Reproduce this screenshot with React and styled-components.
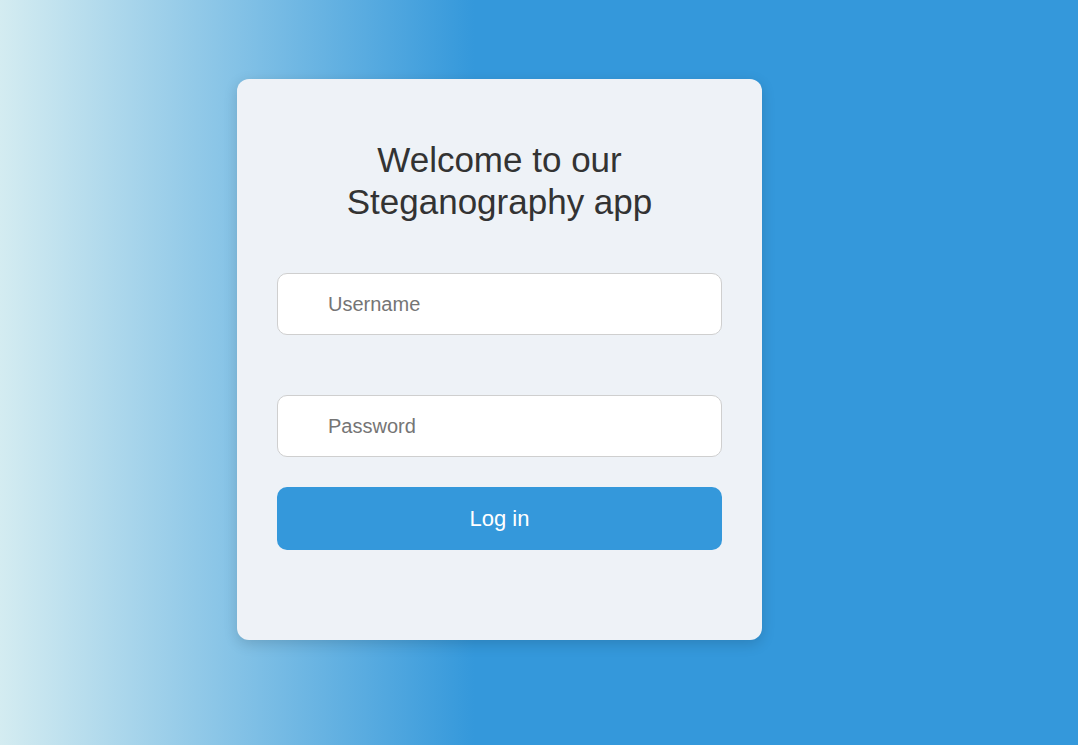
import styled, { createGlobalStyle } from 'styled-components';

const GlobalStyle = createGlobalStyle`
html, body {
  margin: 0;
  padding: 0;
  height: 100%;
}
body {
  font-family: "Liberation Sans", Arial, sans-serif;
}
`;

const Page = styled.div`
min-height: 745px;
box-sizing: border-box;
padding: 79px 0 0 237px;
background: linear-gradient(to right, #d4ecf1 0%, #3498db 44%, #3498db 100%);
`;

const Card = styled.div`
width: 525px;
height: 561px;
box-sizing: border-box;
padding: 60px 40px 0;
background-color: #eef2f7;
border-radius: 12px;
box-shadow: 0 4px 14px rgba(0, 0, 0, 0.15);
display: flex;
flex-direction: column;
`;

const Title = styled.h1`
margin: 0 0 50px;
font-size: 35px;
font-weight: normal;
line-height: 42px;
color: #333;
text-align: center;
`;

const Form = styled.form`
display: flex;
flex-direction: column;
`;

const Field = styled.input`
height: 62px;
box-sizing: border-box;
margin-bottom: ${p => p.$gap}px;
padding: 0 0 0 50px;
border: 1px solid #cfcfcf;
border-radius: 10px;
background: #fff;
font-family: "Liberation Sans", Arial, sans-serif;
font-size: 20px;
color: #333;
outline: none;
&::placeholder {
  color: #757575;
}
`;

const LoginButton = styled.button`
height: 63px;
border: none;
border-radius: 10px;
background-color: #3498db;
color: #fff;
font-family: "Liberation Sans", Arial, sans-serif;
font-size: 22px;
cursor: pointer;
`;

export default function App() {
  return <>
    <GlobalStyle />
    <Page>
      <Card>
        <Title>Welcome to our<br />Steganography app</Title>
        <Form onSubmit={e => e.preventDefault()}>
          <Field $gap={60} type="text" placeholder="Username" />
          <Field $gap={30} type="password" placeholder="Password" />
          <LoginButton type="submit">Log in</LoginButton>
        </Form>
      </Card>
    </Page>
  </>
}
